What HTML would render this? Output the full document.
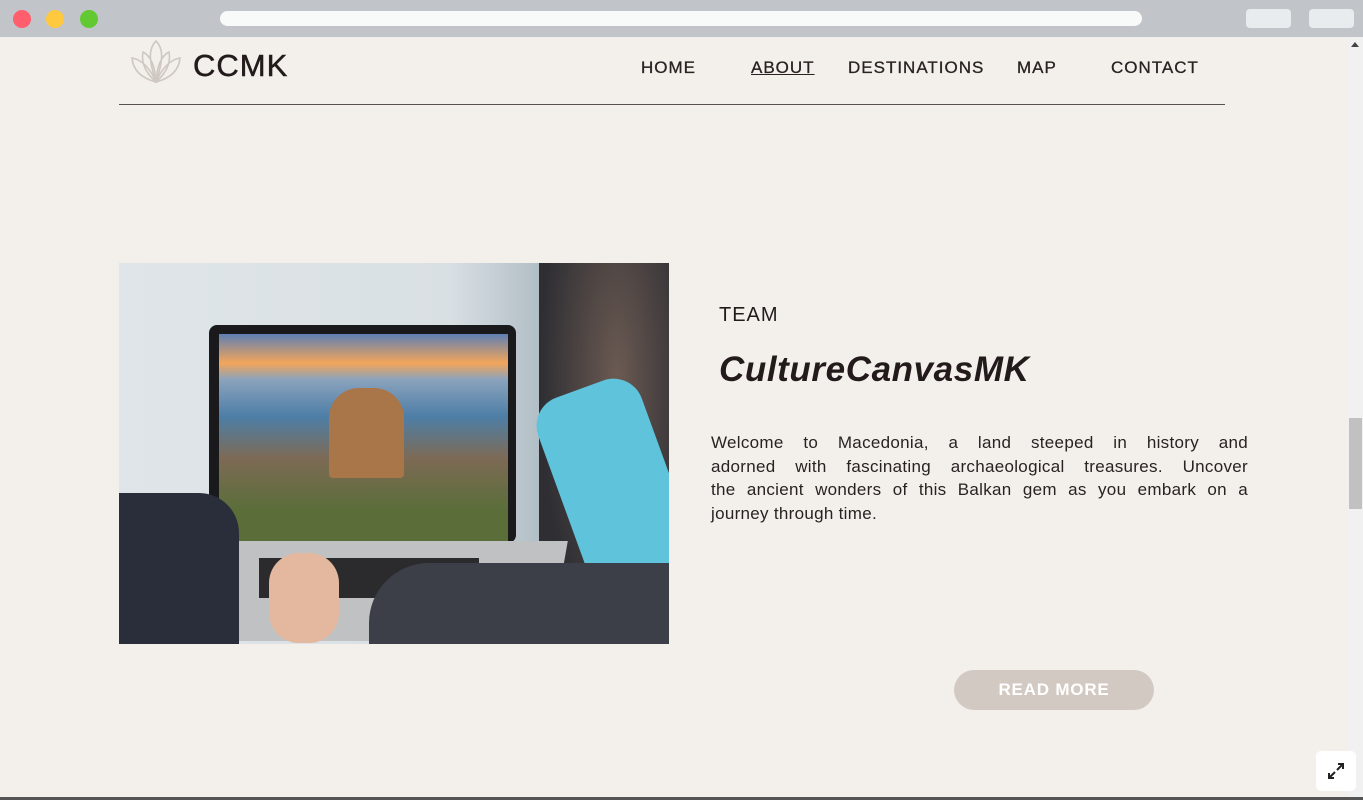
<!DOCTYPE html>
<html><head><style>
*{margin:0;padding:0;box-sizing:border-box}
body{width:1363px;height:800px;overflow:hidden;background:#f3f0ec;font-family:"Liberation Sans",sans-serif;position:relative}
.bar{position:absolute;left:0;top:0;width:1363px;height:37px;background:#c1c4c8}
.dot{position:absolute;top:10px;width:18px;height:18px;border-radius:50%}
.url{position:absolute;left:220px;top:11px;width:922px;height:15px;border-radius:8px;background:#f8f9f9}
.btn{position:absolute;top:9px;width:45px;height:19px;border-radius:4px;background:#e9ecef}
.sb{position:absolute;left:1348px;top:37px;width:15px;height:763px;background:#f1f1f1}
.thumb{position:absolute;left:1349px;top:418px;width:13px;height:91px;background:#c1c1c1}
.nav a{position:absolute;top:58px;font-size:17px;letter-spacing:1px;color:#2a2222;text-decoration:none;-webkit-text-stroke:.3px #2a2222}
.line{position:absolute;left:119px;top:104px;width:1106px;height:1px;background:#5a5050}
.img{position:absolute;left:119px;top:263px;width:550px;height:381px;overflow:hidden;background:linear-gradient(90deg,#dfe5e8 0,#d9e0e4 60%,#a9b7bf 80%,#3b3c40 100%)}
.p div{text-align:justify;text-align-last:justify;white-space:nowrap}
</style></head><body>
<div class="bar">
<div class="dot" style="left:13px;background:#ff5f6d"></div>
<div class="dot" style="left:46px;background:#ffc93f"></div>
<div class="dot" style="left:80px;background:#62c932"></div>
<div class="url"></div>
<div class="btn" style="left:1246px"></div>
<div class="btn" style="left:1309px"></div>
</div>
<div class="sb"></div><div class="thumb"></div>
<div style="position:absolute;left:1351px;top:42px;width:0;height:0;border-left:4px solid transparent;border-right:4px solid transparent;border-bottom:5px solid #444"></div>
<svg style="position:absolute;left:131px;top:40px" width="52" height="43" viewBox="0 0 52 43" fill="none" stroke="#cfc7c2" stroke-width="1.6">
<path d="M25 1 C18 8 17 18 25 42 C33 18 32 8 25 1Z"/>
<path d="M25 42 C14 32 10 22 12 12 C20 16 24 26 25 42Z"/>
<path d="M25 42 C36 32 40 22 38 12 C30 16 26 26 25 42Z"/>
<path d="M25 42 C10 38 2 30 1 18 C12 20 20 30 25 42Z"/>
<path d="M25 42 C40 38 48 30 49 18 C38 20 30 30 25 42Z"/>
</svg>
<div style="position:absolute;left:193px;top:48px;font-size:31px;color:#231b1b;letter-spacing:1px;-webkit-text-stroke:.5px #231b1b">CCMK</div>
<div class="nav">
<a style="left:641px">HOME</a>
<a style="left:751px;text-decoration:underline">ABOUT</a>
<a style="left:848px">DESTINATIONS</a>
<a style="left:1017px">MAP</a>
<a style="left:1111px">CONTACT</a>
</div>
<div class="line"></div>
<div class="img">
<div style="position:absolute;left:420px;top:0;width:130px;height:381px;background:radial-gradient(ellipse at 60% 30%,#6b5a52,#2e2e33 70%)"></div>
<div style="position:absolute;left:440px;top:120px;width:110px;height:200px;background:#5fc3dc;border-radius:30px;transform:rotate(-20deg)"></div>
<div style="position:absolute;left:90px;top:62px;width:307px;height:218px;background:#1a1a1c;border-radius:8px"></div>
<div style="position:absolute;left:100px;top:71px;width:289px;height:207px;background:linear-gradient(180deg,#5d7fb3 0,#f3a55a 14%,#8aa3bd 22%,#4d7ea6 40%,#7d6a55 60%,#5b6e3a 85%)"></div>
<div style="position:absolute;left:210px;top:125px;width:75px;height:90px;background:#a9764a;border-radius:30px 30px 4px 4px"></div>
<div style="position:absolute;left:80px;top:278px;width:360px;height:100px;background:#bfc1c2;transform:skewX(-10deg)"></div>
<div style="position:absolute;left:140px;top:295px;width:220px;height:40px;background:#2b2b2e"></div>
<div style="position:absolute;left:0;top:230px;width:120px;height:151px;background:#2a2e3a;border-radius:0 40px 0 0"></div>
<div style="position:absolute;left:250px;top:300px;width:300px;height:90px;background:#3c3f47;border-radius:60px 0 0 0"></div>
<div style="position:absolute;left:150px;top:290px;width:70px;height:90px;background:#e3b89e;border-radius:30px"></div>
</div>
<div style="position:absolute;left:719px;top:304px;font-size:20px;color:#231b1b;letter-spacing:1px">TEAM</div>
<div style="position:absolute;left:719px;top:350px;font-size:35px;font-weight:bold;font-style:italic;color:#231b1b;letter-spacing:0.6px">CultureCanvasMK</div>
<div class="p" style="position:absolute;left:711px;top:431px;width:537px;font-size:17px;letter-spacing:0.3px;line-height:23.5px;color:#2a2222">
<div>Welcome to Macedonia, a land steeped in history and</div>
<div>adorned with fascinating archaeological treasures. Uncover</div>
<div>the ancient wonders of this Balkan gem as you embark on a</div>
<div style="text-align-last:left">journey through time.</div>
</div>
<div style="position:absolute;left:954px;top:670px;width:200px;height:40px;border-radius:20px;background:#d3c9c3;color:#fff;font-weight:bold;font-size:17px;letter-spacing:.8px;text-align:center;line-height:40px">READ MORE</div>
<div style="position:absolute;left:1316px;top:751px;width:40px;height:40px;background:#fff;border-radius:5px"></div>
<svg style="position:absolute;left:1327px;top:762px" width="18" height="18" viewBox="0 0 18 18" stroke="#222" stroke-width="2" fill="none"><path d="M10 8 L16 2 M11 2 H16 V7 M8 10 L2 16 M2 11 V16 H7"/></svg>
<div style="position:absolute;left:0;top:797px;width:1363px;height:3px;background:#555"></div>
</body></html>
